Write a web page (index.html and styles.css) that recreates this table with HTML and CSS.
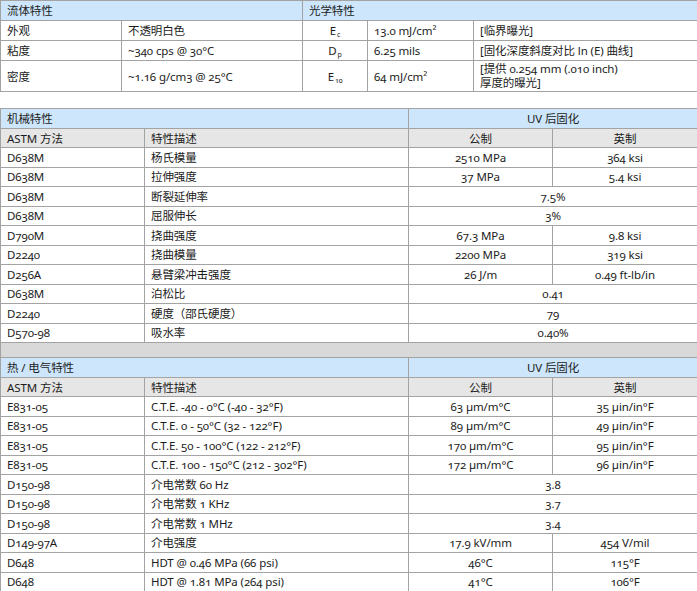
FILE: index.html
```html
<!DOCTYPE html>
<html lang="zh-CN">
<head>
<meta charset="utf-8">
<link rel="stylesheet" href="styles.css">
</head>
<body>
<table class="tbl top">
  <colgroup><col class="c1"><col class="c2"><col class="c3"><col class="c4"><col class="c5"></colgroup>
  <tr class="r-head"><td colspan="2" class="head">流体特性</td><td colspan="3" class="head">光学特性</td></tr>
  <tr class="r-data"><td>外观</td><td>不透明白色</td><td class="ctr">E<sub>c</sub></td><td>13.0 mJ/cm²</td><td>[临界曝光]</td></tr>
  <tr class="r-data"><td>粘度</td><td>~340 cps @ 30°C</td><td class="ctr">D<sub>p</sub></td><td>6.25 mils</td><td>[固化深度斜度对比 ln (E) 曲线]</td></tr>
  <tr class="r-tall"><td>密度</td><td>~1.16 g/cm3 @ 25°C</td><td class="ctr">E<sub>10</sub></td><td>64 mJ/cm²</td><td class="two">[提供 0.254 mm (.010 inch)<br>厚度的曝光]</td></tr>
</table>

<table class="tbl main">
  <colgroup><col class="m1"><col class="m2"><col class="m3"><col class="m4"></colgroup>
  <tr class="r-head"><td colspan="2" class="head">机械特性</td><td colspan="2" class="head ctr">UV 后固化</td></tr>
  <tr class="r-sub"><td class="sub">ASTM 方法</td><td class="sub">特性描述</td><td class="sub ctr">公制</td><td class="sub ctr">英制</td></tr>
  <tr class="r-row"><td>D638M</td><td>杨氏模量</td><td class="ctr">2510 MPa</td><td class="ctr">364 ksi</td></tr>
  <tr class="r-row"><td>D638M</td><td>拉伸强度</td><td class="ctr">37 MPa</td><td class="ctr">5.4 ksi</td></tr>
  <tr class="r-row"><td>D638M</td><td>断裂延伸率</td><td colspan="2" class="ctr">7.5%</td></tr>
  <tr class="r-row"><td>D638M</td><td>屈服伸长</td><td colspan="2" class="ctr">3%</td></tr>
  <tr class="r-row"><td>D790M</td><td>挠曲强度</td><td class="ctr">67.3 MPa</td><td class="ctr">9.8 ksi</td></tr>
  <tr class="r-row"><td>D2240</td><td>挠曲模量</td><td class="ctr">2200 MPa</td><td class="ctr">319 ksi</td></tr>
  <tr class="r-row"><td>D256A</td><td>悬臂梁冲击强度</td><td class="ctr">26 J/m</td><td class="ctr">0.49 ft-lb/in</td></tr>
  <tr class="r-row"><td>D638M</td><td>泊松比</td><td colspan="2" class="ctr">0.41</td></tr>
  <tr class="r-row"><td>D2240</td><td>硬度（邵氏硬度）</td><td colspan="2" class="ctr">79</td></tr>
  <tr class="r-row"><td>D570-98</td><td>吸水率</td><td colspan="2" class="ctr">0.40%</td></tr>
  <tr class="r-sep"><td colspan="4" class="sep"></td></tr>
  <tr class="r-head"><td colspan="2" class="head">热 / 电气特性</td><td colspan="2" class="head ctr">UV 后固化</td></tr>
  <tr class="r-sub"><td class="sub">ASTM 方法</td><td class="sub">特性描述</td><td class="sub ctr">公制</td><td class="sub ctr">英制</td></tr>
  <tr class="r-row"><td>E831-05</td><td>C.T.E. -40 - 0°C (-40 - 32°F)</td><td class="ctr">63 µm/m°C</td><td class="ctr">35 µin/in°F</td></tr>
  <tr class="r-row"><td>E831-05</td><td>C.T.E. 0 - 50°C (32 - 122°F)</td><td class="ctr">89 µm/m°C</td><td class="ctr">49 µin/in°F</td></tr>
  <tr class="r-row"><td>E831-05</td><td>C.T.E. 50 - 100°C (122 - 212°F)</td><td class="ctr">170 µm/m°C</td><td class="ctr">95 µin/in°F</td></tr>
  <tr class="r-row"><td>E831-05</td><td>C.T.E. 100 - 150°C (212 - 302°F)</td><td class="ctr">172 µm/m°C</td><td class="ctr">96 µin/in°F</td></tr>
  <tr class="r-row"><td>D150-98</td><td>介电常数 60 Hz</td><td colspan="2" class="ctr">3.8</td></tr>
  <tr class="r-row"><td>D150-98</td><td>介电常数 1 KHz</td><td colspan="2" class="ctr">3.7</td></tr>
  <tr class="r-row"><td>D150-98</td><td>介电常数 1 MHz</td><td colspan="2" class="ctr">3.4</td></tr>
  <tr class="r-row"><td>D149-97A</td><td>介电强度</td><td class="ctr">17.9 kV/mm</td><td class="ctr">454 V/mil</td></tr>
  <tr class="r-row"><td>D648</td><td>HDT @ 0.46 MPa (66 psi)</td><td class="ctr">46°C</td><td class="ctr">115°F</td></tr>
  <tr class="r-row"><td>D648</td><td>HDT @ 1.81 MPa (264 psi)</td><td class="ctr">41°C</td><td class="ctr">106°F</td></tr>
</table>
</body>
</html>
```

FILE: styles.css
```css
html, body {
  margin: 0;
  padding: 0;
  background: #ffffff;
}
body {
  width: 697px;
  font-family: "Noto Sans", "Noto Sans CJK SC", sans-serif;
  font-size: 11.5px;
  letter-spacing: -0.1px;
  color: #1c1c1c;
  font-feature-settings: "onum" 1;
  font-variant-numeric: oldstyle-nums;
}
.tbl {
  width: 697px;
  border-collapse: collapse;
  table-layout: fixed;
}
.tbl td {
  border: 1px solid #a3a3a3;
  padding: 1px 6px 0 6px;
  line-height: 14px;
  vertical-align: middle;
  white-space: nowrap;
  overflow: hidden;
  box-sizing: border-box;
}
.tbl td.two { line-height: 14px; padding-top: 0; }
.top { margin-bottom: 16px; }
.c1 { width: 121px; }
.c2 { width: 181px; }
.c3 { width: 65px; }
.c4 { width: 106px; }
.c5 { width: 224px; }
.m1 { width: 144px; }
.m2 { width: 264px; }
.m3 { width: 144px; }
.m4 { width: 145px; }
.r-head td { height: 20px; }
.r-data td { height: 20px; }
.r-tall td { height: 31px; }
.r-sub td { height: 19px; }
.r-row td { height: 19.5px; }
.r-sep td { height: 15px; }
.head { background: #cde6fb; }
.sub { background: #e6e6e6; }
.sep { background: #d9d9d9; }
.ctr { text-align: center; }
sub {
  font-size: 7px;
  vertical-align: -2px;
  line-height: 0;
  margin-left: 1px;
}
```
